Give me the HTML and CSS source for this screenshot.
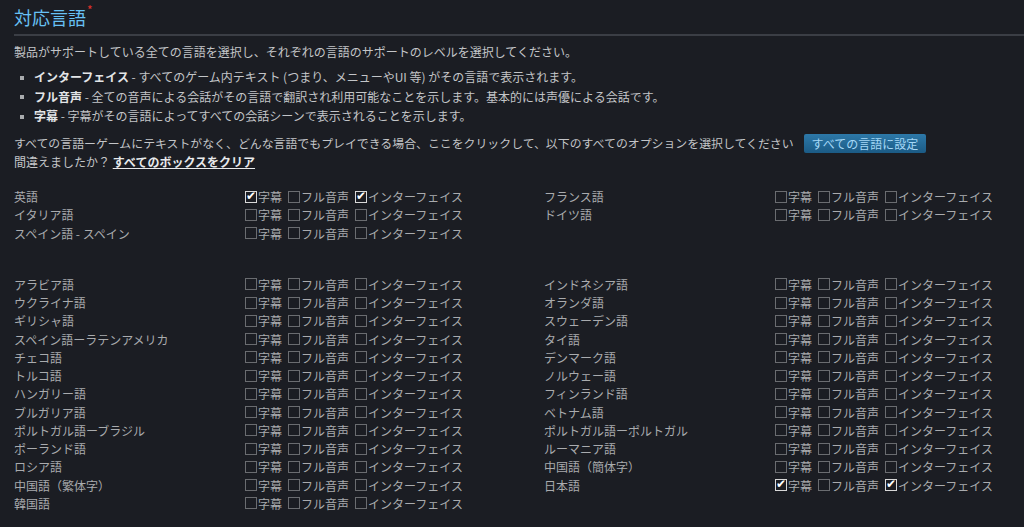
FILE: index.html
```html
<!DOCTYPE html>
<html lang="ja">
<head>
  <meta charset="UTF-8">
  <title>対応言語</title>
  <link rel="stylesheet" href="styles.css">
</head>
<body>

<div class="section">
  <h2 class="section-title">対応言語<span class="required">*</span></h2>

  <p class="intro">製品がサポートしている全ての言語を選択し、それぞれの言語のサポートのレベルを選択してください。</p>

  <ul class="levels">
    <li><strong>インターフェイス</strong> - すべてのゲーム内テキスト (つまり、メニューやUI 等) がその言語で表示されます。</li>
    <li><strong>フル音声</strong> - 全ての音声による会話がその言語で翻訳され利用可能なことを示します。基本的には声優による会話です。</li>
    <li><strong>字幕</strong> - 字幕がその言語によってすべての会話シーンで表示されることを示します。</li>
  </ul>

  <div class="all-langs">
    <span>すべての言語ーゲームにテキストがなく、どんな言語でもプレイできる場合、ここをクリックして、以下のすべてのオプションを選択してください</span>
    <button class="btn-blue">すべての言語に設定</button>
  </div>
  <div class="clear-line">間違えましたか？ <a href="#" class="clear-link">すべてのボックスをクリア</a></div>

  <div class="lang-grid" id="mainLangs"></div>
  <div class="lang-grid" id="otherLangs"></div>
</div>

<script>
var mainLangs = [
  ['英語', 1, 0, 1], ['フランス語', 0, 0, 0],
  ['イタリア語', 0, 0, 0], ['ドイツ語', 0, 0, 0],
  ['スペイン語 - スペイン', 0, 0, 0]
];

var otherLangs = [
  ['アラビア語', 0, 0, 0], ['インドネシア語', 0, 0, 0],
  ['ウクライナ語', 0, 0, 0], ['オランダ語', 0, 0, 0],
  ['ギリシャ語', 0, 0, 0], ['スウェーデン語', 0, 0, 0],
  ['スペイン語ーラテンアメリカ', 0, 0, 0], ['タイ語', 0, 0, 0],
  ['チェコ語', 0, 0, 0], ['デンマーク語', 0, 0, 0],
  ['トルコ語', 0, 0, 0], ['ノルウェー語', 0, 0, 0],
  ['ハンガリー語', 0, 0, 0], ['フィンランド語', 0, 0, 0],
  ['ブルガリア語', 0, 0, 0], ['ベトナム語', 0, 0, 0],
  ['ポルトガル語ーブラジル', 0, 0, 0], ['ポルトガル語ーポルトガル', 0, 0, 0],
  ['ポーランド語', 0, 0, 0], ['ルーマニア語', 0, 0, 0],
  ['ロシア語', 0, 0, 0], ['中国語（簡体字）', 0, 0, 0],
  ['中国語（繁体字）', 0, 0, 0], ['日本語', 1, 0, 1],
  ['韓国語', 0, 0, 0]
];

function box(checked, label) {
  return '<label class="opt"><input type="checkbox"' + (checked ? ' checked' : '') + '>' + label + '</label>';
}

function fillGrid(id, langs) {
  var grid = document.getElementById(id);
  langs.forEach(function(lang) {
    var row = document.createElement('div');
    row.className = 'lang-row';
    row.innerHTML = '<span class="lang-name">' + lang[0] + '</span>' +
      '<span class="opts">' + box(lang[1], '字幕') + box(lang[2], 'フル音声') + box(lang[3], 'インターフェイス') + '</span>';
    grid.appendChild(row);
  });
}

fillGrid('mainLangs', mainLangs);
fillGrid('otherLangs', otherLangs);

document.querySelector('.btn-blue').addEventListener('click', function() {
  document.querySelectorAll('.lang-grid input').forEach(function(c) { c.checked = true; });
});

document.querySelector('.clear-link').addEventListener('click', function(e) {
  e.preventDefault();
  document.querySelectorAll('.lang-grid input').forEach(function(c) { c.checked = false; });
});
</script>

</body>
</html>
```

FILE: styles.css
```css
:root {
  --bg: #1b1d23;
  --text: #c3c5c8;
  --text-dim: #a9abae;
  --accent: #67c1f5;
  --rule: #3b3e45;
}

body {
  margin: 0;
  background-color: var(--bg);
  color: var(--text);
  font-family: "Noto Sans CJK JP", "Noto Sans", sans-serif;
  font-size: 12px;
}

.section {
  padding: 4px 0 0 14px;
}

.section-title {
  margin: 0;
  padding-bottom: 4px;
  font-size: 18px;
  font-weight: normal;
  line-height: 26px;
  color: var(--accent);
  border-bottom: 2px solid var(--rule);
}

.required {
  color: #e0312a;
  font-size: 12px;
  vertical-align: top;
  line-height: 12px;
  margin-left: 1px;
}

.intro {
  margin: 7px 0 0;
  line-height: 18px;
}

.levels {
  margin: 6px 0 0;
  padding: 0 0 0 4px;
  list-style: none;
}

.levels li {
  line-height: 19.5px;
}

.levels li::before {
  content: "";
  display: inline-block;
  width: 4px;
  height: 4px;
  background: #a9abae;
  margin: 0 10px 2px 2px;
  vertical-align: middle;
}

.levels strong {
  color: #e3e5e7;
}

.all-langs {
  margin-top: 8px;
  display: flex;
  align-items: center;
  gap: 10px;
  line-height: 18px;
  font-size: 11.9px;
}

.btn-blue {
  font-family: inherit;
  font-size: 12px;
  color: #a5d8f7;
  background: linear-gradient(to bottom, #2d78a8, #1b5b85);
  border: none;
  border-radius: 2px;
  padding: 0 8px;
  height: 19px;
  line-height: 19px;
  cursor: pointer;
}

.clear-line {
  line-height: 17px;
}

.clear-link {
  color: #e8eaec;
  font-weight: bold;
  text-decoration: underline;
}

.lang-grid {
  display: grid;
  grid-template-columns: 530px 480px;
  margin-top: 18px;
}

.lang-grid + .lang-grid {
  margin-top: 33px;
}

.lang-row {
  display: flex;
  height: 18.25px;
  align-items: center;
  color: var(--text-dim);
}

.lang-name {
  width: 231px;
}

.opts {
  display: flex;
  gap: 6px;
}

.opt {
  display: flex;
  align-items: center;
  gap: 1px;
}

.opt input {
  appearance: none;
  -webkit-appearance: none;
  width: 12px;
  height: 12px;
  margin: 0;
  border: 1px solid #6a6c70;
  background: #1b1d23;
  position: relative;
}

.opt input:checked {
  border-color: #d8d8d8;
}

.opt input:checked::after {
  content: "✔";
  position: absolute;
  left: 0;
  top: -3px;
  font-size: 12px;
  color: #ffffff;
  font-family: "DejaVu Sans", sans-serif;
}
```
